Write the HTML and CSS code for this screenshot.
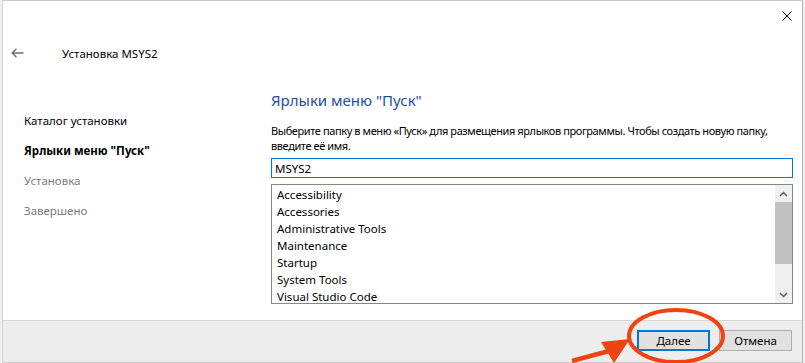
FILE: index.html
```html
<!DOCTYPE html>
<html lang="ru">
<head>
    <meta charset="UTF-8">
    <meta name="viewport" content="width=device-width, initial-scale=1.0">
    <title>Установка MSYS2</title>
    <link rel="stylesheet" href="styles.css">
</head>
<body>
    <div class="edge"></div>

    <div class="window">
        <div class="titlebar">
            <button class="close" type="button" title="Закрыть">
                <svg width="10" height="10" viewBox="0 0 10 10"><path d="M0.5 0.5L9.5 9.5M9.5 0.5L0.5 9.5" stroke="#111" stroke-width="1" fill="none"/></svg>
            </button>
        </div>

        <div class="header">
            <svg class="back" width="13" height="10" viewBox="0 0 13 10"><path d="M1 5H12.5M5.5 0.7L1.2 5L5.5 9.3" stroke="#707070" stroke-width="1.4" fill="none"/></svg>
            <span class="title">Установка MSYS2</span>
        </div>

        <div class="main">
            <ul class="steps">
                <li>Каталог установки</li>
                <li class="current">Ярлыки меню "Пуск"</li>
                <li class="todo">Установка</li>
                <li class="todo">Завершено</li>
            </ul>

            <div class="page">
                <h1>Ярлыки меню "Пуск"</h1>
                <p class="hint">Выберите папку в меню «Пуск» для размещения ярлыков программы. Чтобы создать новую папку,<br>введите её имя.</p>
                <input class="folder" type="text" value="MSYS2">
                <div class="listbox">
                    <ul class="folders">
                        <li>Accessibility</li>
                        <li>Accessories</li>
                        <li>Administrative Tools</li>
                        <li>Maintenance</li>
                        <li>Startup</li>
                        <li>System Tools</li>
                        <li>Visual Studio Code</li>
                    </ul>
                    <div class="scrollbar">
                        <span class="arrow"><svg width="9" height="6" viewBox="0 0 9 6"><path d="M1 5L4.5 1.5L8 5" stroke="#606060" stroke-width="1.5" fill="none"/></svg></span>
                        <span class="thumb"></span>
                        <span class="track"></span>
                        <span class="arrow"><svg width="9" height="6" viewBox="0 0 9 6"><path d="M1 1L4.5 4.5L8 1" stroke="#606060" stroke-width="1.5" fill="none"/></svg></span>
                    </div>
                </div>
            </div>
        </div>

        <div class="footer">
            <button class="btn btn-default" type="button">Далее</button>
            <button class="btn" type="button">Отмена</button>
        </div>
    </div>

    <!-- red marker drawn over the screenshot -->
    <svg class="annotation" width="805" height="363" viewBox="0 0 805 363">
        <ellipse cx="676" cy="336" rx="47" ry="26" fill="none" stroke="#ee4412" stroke-width="4"/>
        <path d="M572 361L609 351" stroke="#ee4412" stroke-width="4.5" fill="none"/>
        <polygon points="601,342 614,363 630,339" fill="#ee4412"/>
    </svg>
</body>
</html>
```

FILE: styles.css
```css
body {
    margin: 0;
    height: 363px;
    overflow: hidden;
    display: flex;
    background: #f0f0f0;
    font-family: 'Noto Sans', 'Open Sans', sans-serif;
    font-size: 11.5px;
    color: #000;
}

.edge {
    width: 3px;
    border-right: 1px solid #d0d0d0;
    box-sizing: border-box;
}

.window {
    width: 800px;
    height: 363px;
    box-sizing: border-box;
    display: flex;
    flex-direction: column;
    background: #fff;
    border-top: 1px solid #c9c9c9;
    border-right: 1px solid #b4b4b4;
    border-bottom: 1px solid #c9c9c9;
}

.titlebar {
    height: 30px;
    display: flex;
    align-items: center;
    justify-content: flex-end;
    padding-right: 10px;
}

.close {
    border: none;
    background: none;
    padding: 0;
    width: 10px;
    height: 10px;
    display: flex;
}

.header {
    height: 44px;
    display: flex;
    align-items: center;
    padding-left: 8px;
}

.title {
    margin-left: 38px;
}

.main {
    height: 245px;
    display: flex;
}

.steps {
    list-style: none;
    margin: 0;
    width: 268px;
    box-sizing: border-box;
    padding: 31px 0 0 21px;
}

.steps li {
    line-height: 30px;
}

.steps .current {
    font-weight: bold;
}

.steps .todo {
    color: #7a7a7a;
}

.page {
    width: 522px;
    padding-top: 15px;
}

.page h1 {
    margin: 0;
    font-size: 15px;
    font-weight: normal;
    line-height: 20px;
    color: #1f4ea6;
}

.hint {
    margin: 13px 0 0;
    font-size: 11px;
    letter-spacing: -0.4px;
    line-height: 15px;
    white-space: nowrap;
}

.folder {
    display: block;
    width: 100%;
    height: 20px;
    margin: 5px 0 0;
    box-sizing: border-box;
    border: 1px solid #0078d7;
    padding: 0 3px;
    font: inherit;
    outline: none;
}

.listbox {
    margin-top: 6px;
    height: 120px;
    box-sizing: border-box;
    border: 1px solid #828790;
    display: flex;
    overflow: hidden;
}

.folders {
    list-style: none;
    flex: 1;
    margin: 0;
    padding: 1px 0 0 5px;
}

.folders li {
    line-height: 17px;
}

.scrollbar {
    width: 17px;
    display: flex;
    flex-direction: column;
    background: #f0f0f0;
}

.arrow {
    height: 17px;
    display: flex;
    align-items: center;
    justify-content: center;
}

.thumb {
    height: 62px;
    background: #c1c1c1;
}

.track {
    flex: 1;
}

.footer {
    flex: 1;
    display: flex;
    justify-content: flex-end;
    align-items: flex-start;
    gap: 9px;
    padding: 9px 10px 0 0;
    background: #ededed;
    border-top: 1px solid #d6d6d6;
}

.btn {
    width: 73px;
    height: 21px;
    padding: 0;
    background: #e1e1e1;
    border: 1px solid #adadad;
    font: inherit;
    color: #000;
}

.btn-default {
    border: 2px solid #0078d7;
}

.annotation {
    position: absolute;
    left: 0;
    top: 0;
    pointer-events: none;
}
```
